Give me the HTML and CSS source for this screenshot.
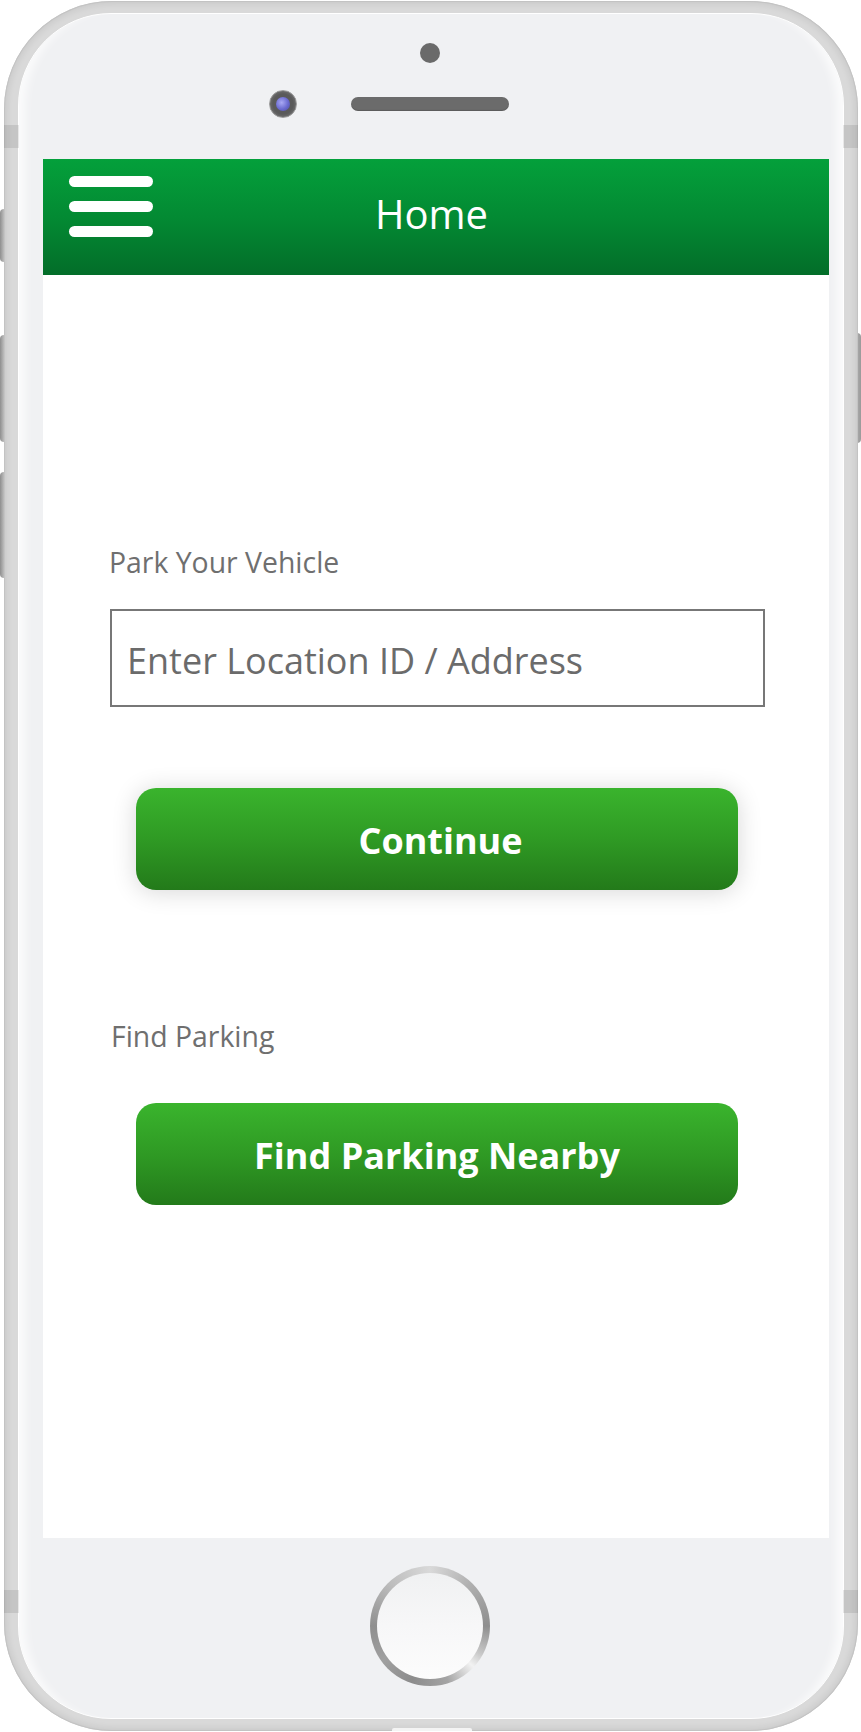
FILE: index.html
```html
<!DOCTYPE html>
<html lang="en">
<head>
<meta charset="utf-8">
<title>Home</title>
<link rel="stylesheet" href="styles.css">
</head>
<body>
<div class="phone">
  <span class="side-btn mute"></span>
  <span class="side-btn vol-up"></span>
  <span class="side-btn vol-down"></span>
  <span class="side-btn power"></span>
  <span class="antenna ant-tl"></span>
  <span class="antenna ant-tr"></span>
  <span class="antenna ant-bl"></span>
  <span class="antenna ant-br"></span>
  <span class="port"></span>
  <div class="bezel">
    <div class="top-area">
      <span class="sensor"></span>
      <div class="cam-row">
        <span class="camera"><span class="lens"></span></span>
        <span class="speaker"></span>
        <span class="cam-spacer"></span>
      </div>
    </div>
    <div class="screen">
      <header class="appbar">
        <button class="menu" aria-label="Menu"><span></span><span></span><span></span></button>
        <h1 class="title">Home</h1>
        <span class="appbar-end"></span>
      </header>
      <main class="content">
        <label class="field-label" for="loc">Park Your Vehicle</label>
        <input id="loc" class="loc-input" type="text" placeholder="Enter Location ID / Address">
        <button class="btn btn-raised">Continue</button>
        <p class="section-label">Find Parking</p>
        <button class="btn">Find Parking Nearby</button>
      </main>
    </div>
    <div class="bottom-area">
      <span class="home-btn"><span class="home-inner"></span></span>
    </div>
  </div>
</div>
</body>
</html>
```

FILE: styles.css
```css
html {
  margin: 0;
  padding: 0;
  background: #ffffff;
}

body {
  margin: 0;
  padding: 0;
  width: 861px;
  height: 1732px;
  overflow: hidden;
  font-family: "Open Sans", "Noto Sans", sans-serif;
}

.phone {
  position: relative;
  box-sizing: border-box;
  width: 854px;
  height: 1730px;
  margin: 1px 0 0 4px;
  border-radius: 108px;
  background: #d9d9d9;
  box-shadow: inset 0 0 0 1px #c3c3c3, inset 0 0 6px 3px rgba(0, 0, 0, 0.07);
  padding: 12px 14px;
}

.side-btn {
  position: absolute;
  z-index: -1;
  width: 10px;
  border-radius: 4px;
  background: linear-gradient(90deg, #8e8e8e, #bdbdbd 40%, #a6a6a6 70%, #9a9a9a);
}
.mute { left: -4px; top: 208px; height: 53px; }
.vol-up { left: -4px; top: 334px; height: 107px; }
.vol-down { left: -4px; top: 471px; height: 106px; }
.power { right: -3px; top: 332px; height: 110px; }

.antenna {
  position: absolute;
  width: 15px;
  height: 23px;
  background: rgba(0, 0, 0, 0.09);
}
.ant-tl { left: 0; top: 124px; }
.ant-tr { right: 0; top: 124px; }
.ant-bl { left: 0; top: 1589px; }
.ant-br { right: 0; top: 1589px; }

.port {
  position: absolute;
  left: 388px;
  bottom: 0;
  width: 80px;
  height: 3px;
  border-radius: 2px 2px 0 0;
  background: #f4f4f4;
}

.bezel {
  box-sizing: border-box;
  height: 100%;
  border: 1px solid #ffffff;
  border-radius: 93px;
  background: #f0f1f3;
  box-shadow: inset 14px 0 10px -8px rgba(255, 255, 255, 0.75), inset -14px 0 10px -8px rgba(255, 255, 255, 0.75);
  display: flex;
  flex-direction: column;
}

.top-area {
  height: 145px;
  display: flex;
  flex-direction: column;
  align-items: center;
}

.sensor {
  width: 20px;
  height: 20px;
  margin-top: 29px;
  margin-right: 2px;
  border-radius: 50%;
  background: #6a6a6a;
}

.cam-row {
  display: flex;
  align-items: center;
  gap: 54px;
  margin-top: 27px;
  margin-right: 2px;
}

.camera {
  box-sizing: border-box;
  width: 28px;
  height: 28px;
  border-radius: 50%;
  background: radial-gradient(circle at 50% 50%, #5a5a5a 55%, #707070 75%, #8a8a8a);
  border: 1px solid #9a9a9a;
  display: flex;
  align-items: center;
  justify-content: center;
}

.lens {
  width: 14px;
  height: 14px;
  border-radius: 50%;
  background: radial-gradient(circle at 40% 40%, #a9a9f4, #6a6ad0 55%, #4b4b9a);
}

.speaker {
  width: 158px;
  height: 14px;
  border-radius: 7px;
  background: #6b6b6b;
  box-shadow: inset 0 -1px 1px rgba(0, 0, 0, 0.15);
}

.cam-spacer {
  width: 28px;
  height: 28px;
}

.screen {
  width: 786px;
  height: 1379px;
  margin-left: 24px;
  background: #ffffff;
  display: flex;
  flex-direction: column;
}

.appbar {
  height: 116px;
  box-sizing: border-box;
  padding: 0 26px;
  background: linear-gradient(180deg, #04a03b 0%, #038a33 50%, #036d29 100%);
  display: grid;
  grid-template-columns: 1fr auto 1fr;
  align-items: start;
}

.menu {
  justify-self: start;
  margin-top: 17px;
  padding: 0;
  border: 0;
  background: none;
  width: 84px;
  display: flex;
  flex-direction: column;
  gap: 14px;
}

.menu span {
  display: block;
  height: 11px;
  border-radius: 6px;
  background: #ffffff;
}

.title {
  margin: 35px 9px 0 0;
  font-size: 40px;
  line-height: 40px;
  font-weight: 400;
  color: #ffffff;
}

.content {
  padding: 268px 0 0 67px;
  display: flex;
  flex-direction: column;
  align-items: flex-start;
}

.field-label,
.section-label {
  display: block;
  margin: 0;
  font-size: 28.4px;
  line-height: 38px;
  color: #6f6f6f;
}

.field-label {
  margin-left: -1px;
}

.section-label {
  margin-left: 1px;
}

.loc-input {
  box-sizing: border-box;
  width: 655px;
  height: 98px;
  margin: 28px 0 0 0;
  padding: 4px 0 0 15px;
  border: 2px solid #777777;
  border-radius: 0;
  outline: none;
  background: #ffffff;
  font-family: "Open Sans", "Noto Sans", sans-serif;
  font-size: 36px;
  color: #333333;
}

.loc-input::placeholder {
  color: #6b6b6b;
  opacity: 1;
}

.btn {
  box-sizing: border-box;
  width: 602px;
  height: 102px;
  margin: 48px 0 0 26px;
  padding: 4px 0 0 0;
  border: 0;
  border-radius: 20px;
  background: linear-gradient(180deg, #3ab42d 0%, #2f9a24 50%, #237a1a 100%);
  color: #ffffff;
  font-family: "Open Sans", "Noto Sans", sans-serif;
  font-size: 36px;
  font-weight: 700;
  line-height: 98px;
  text-align: center;
}

.btn-raised {
  margin-top: 81px;
  padding-left: 7px;
  box-shadow: 0 2px 24px rgba(0, 0, 0, 0.16);
}

.section-label {
  margin-top: 127px;
}

.bottom-area {
  flex: 1;
  display: flex;
  justify-content: center;
  align-items: flex-start;
}

.home-btn {
  box-sizing: border-box;
  width: 120px;
  height: 120px;
  margin-top: 28px;
  margin-right: 2px;
  border-radius: 50%;
  padding: 7px;
  background: conic-gradient(from 0deg, #d9d9d9, #b0b0b0 12%, #8e8e8e 25%, #c8c8c8 33%, #f2f2f2 37%, #a4a4a4 45%, #8c8c8c 55%, #a0a0a0 65%, #8f8f8f 75%, #bdbdbd 88%, #d9d9d9);
}

.home-inner {
  display: block;
  width: 100%;
  height: 100%;
  border-radius: 50%;
  background: linear-gradient(180deg, #f0f1f2 0%, #f7f7f8 50%, #fcfcfc 100%);
}
```
